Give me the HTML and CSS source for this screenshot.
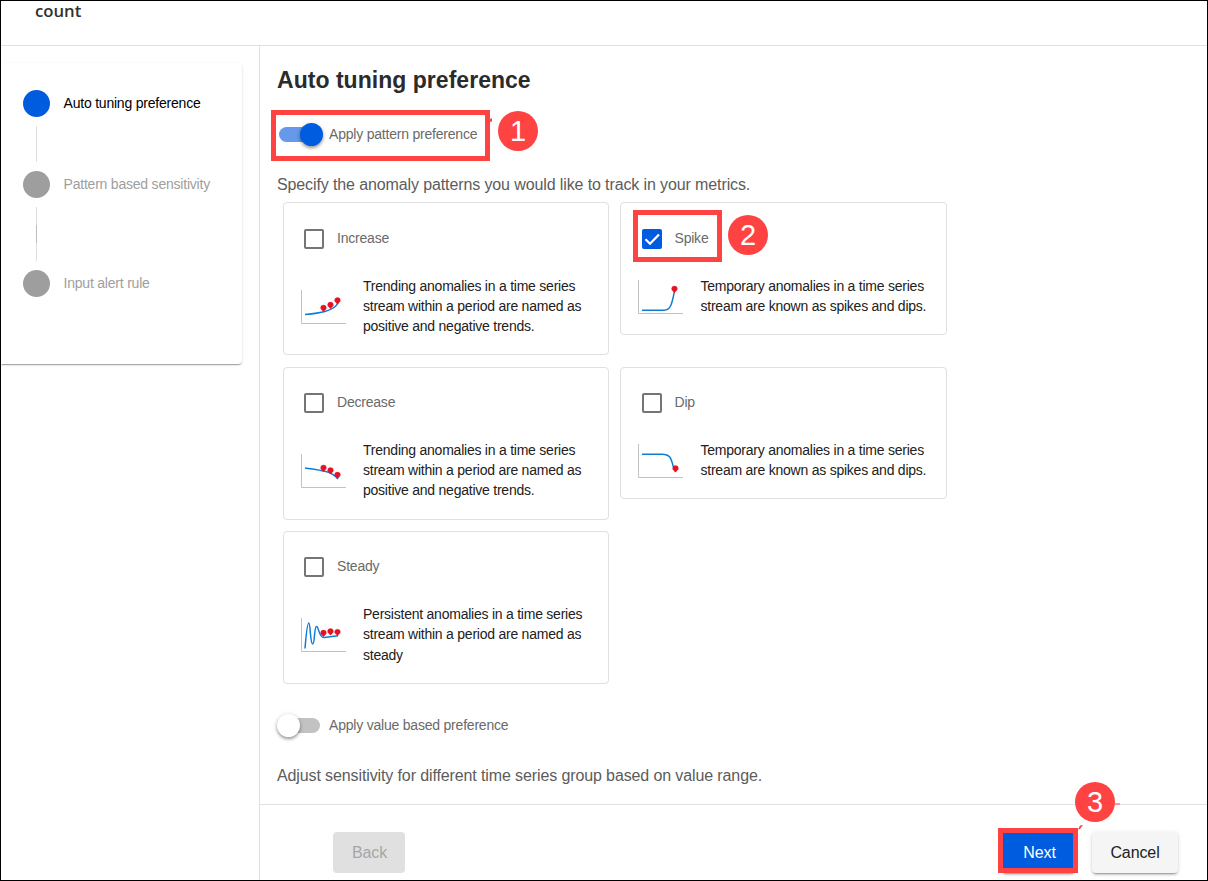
FILE: index.html
```html
<!DOCTYPE html>
<html lang="en">
<head>
<meta charset="utf-8">
<title>Auto tuning preference</title>
<link rel="stylesheet" href="styles.css">
</head>
<body>
<div class="window">
  <header class="topbar"><span class="topbar-title">count</span></header>
  <div class="body">
    <aside class="sidebar">
      <div class="stepper">
        <div class="step active"><span class="dot"></span><span class="step-label">Auto tuning preference</span></div>
        <div class="connector"></div>
        <div class="step"><span class="dot"></span><span class="step-label">Pattern based sensitivity</span></div>
        <div class="connector long"></div>
        <div class="step"><span class="dot"></span><span class="step-label">Input alert rule</span></div>
      </div>
    </aside>
    <main class="main">
      <section class="content">
        <h1 class="title">Auto tuning preference</h1>
        <div class="toggle-row">
          <span class="switch on"><span class="knob"></span></span>
          <span class="label">Apply pattern preference</span>
        </div>
        <p class="hint">Specify the anomaly patterns you would like to track in your metrics.</p>
        <div class="cards">
          <article class="card first">
            <div class="check-row"><span class="checkbox"></span><span class="label">Increase</span></div>
            <div class="info">
              <svg class="chart" width="46" height="35" viewBox="0 0 46 35">
                <path class="axis" d="M.5 0V33.5H45"/>
                <path class="curve" d="M4 24.600C17 23.200 33 21.500 37 13"/>
                <path class="pin" d="M22.500 15a2.900 2.900 0 0 1 2.900 2.900c0 1.500-1.600 2-2.900 3.800-1.300-1.800-2.900-2.300-2.900-3.800a2.900 2.900 0 0 1 2.900-2.900z"/>
                <path class="pin" transform="translate(7 -3)" d="M22.500 15a2.900 2.900 0 0 1 2.900 2.900c0 1.500-1.600 2-2.900 3.800-1.300-1.800-2.900-2.300-2.900-3.800a2.900 2.900 0 0 1 2.900-2.900z"/>
                <path class="pin" transform="translate(14 -7.500)" d="M22.500 15a2.900 2.900 0 0 1 2.900 2.900c0 1.500-1.600 2-2.900 3.800-1.300-1.800-2.900-2.300-2.900-3.800a2.900 2.900 0 0 1 2.900-2.900z"/>
              </svg>
              <p class="desc">Trending anomalies in a time series<br>stream within a period are named as<br>positive and negative trends.</p>
            </div>
          </article>
          <article class="card short first">
            <div class="check-row"><span class="checkbox checked"><svg width="20" height="20" viewBox="0 0 20 20"><path d="M3.500 10.300L8 14.700L17 5.500"/></svg></span><span class="label">Spike</span></div>
            <div class="info">
              <svg class="chart raised" width="46" height="35" viewBox="0 0 46 35">
                <path class="axis" d="M.5 0V33.500H45"/>
                <path class="curve" d="M4 30.300H26C33 30.300 34 23 36.500 11"/>
                <path class="pin" transform="translate(14 -9)" d="M22.500 15a2.900 2.900 0 0 1 2.900 2.900c0 1.500-1.600 2-2.900 3.800-1.300-1.800-2.900-2.300-2.900-3.800a2.900 2.900 0 0 1 2.900-2.900z"/>
              </svg>
              <p class="desc">Temporary anomalies in a time series<br>stream are known as spikes and dips.</p>
            </div>
          </article>
          <article class="card">
            <div class="check-row"><span class="checkbox"></span><span class="label">Decrease</span></div>
            <div class="info">
              <svg class="chart" width="46" height="35" viewBox="0 0 46 35">
                <path class="axis" d="M.5 0V33.500H45"/>
                <path class="curve" d="M4 14C19 16 31 17 37 25"/>
                <path class="pin" transform="translate(0 -4)" d="M22.500 15a2.900 2.900 0 0 1 2.900 2.900c0 1.500-1.600 2-2.900 3.800-1.300-1.800-2.900-2.300-2.900-3.800a2.900 2.900 0 0 1 2.900-2.900z"/>
                <path class="pin" transform="translate(7 -1.500)" d="M22.500 15a2.900 2.900 0 0 1 2.900 2.900c0 1.500-1.600 2-2.900 3.800-1.300-1.800-2.900-2.300-2.900-3.800a2.900 2.900 0 0 1 2.900-2.900z"/>
                <path class="pin" transform="translate(14 3)" d="M22.500 15a2.900 2.900 0 0 1 2.900 2.900c0 1.500-1.600 2-2.900 3.800-1.300-1.800-2.900-2.300-2.900-3.800a2.900 2.900 0 0 1 2.900-2.900z"/>
              </svg>
              <p class="desc">Trending anomalies in a time series<br>stream within a period are named as<br>positive and negative trends.</p>
            </div>
          </article>
          <article class="card short dip">
            <div class="check-row"><span class="checkbox"></span><span class="label">Dip</span></div>
            <div class="info">
              <svg class="chart raised" width="46" height="35" viewBox="0 0 46 35">
                <path class="axis" d="M.5 0V33.500H45"/>
                <path class="curve" d="M4 10.300H24C32 10.300 33 14 35 21.500L37 27"/>
                <path class="pin" transform="translate(15 6.500)" d="M22.500 15a2.900 2.900 0 0 1 2.900 2.900c0 1.500-1.600 2-2.900 3.800-1.300-1.800-2.900-2.300-2.900-3.800a2.900 2.900 0 0 1 2.900-2.900z"/>
              </svg>
              <p class="desc">Temporary anomalies in a time series<br>stream are known as spikes and dips.</p>
            </div>
          </article>
          <article class="card">
            <div class="check-row"><span class="checkbox"></span><span class="label">Steady</span></div>
            <div class="info">
              <svg class="chart" width="46" height="35" viewBox="0 0 46 35">
                <path class="axis" d="M.5 0V33.500H45"/>
                <path class="curve" d="M4 30.500C5 19 6 5 7.800 5C9.600 5 9 26 11.700 26C14 26 13 8.500 15.500 8.500C18 8.500 17.500 19.500 23 19.500C27 19.500 33 17.500 37 18"/>
                <path class="pin" transform="translate(0 -3)" d="M22.500 15a2.900 2.900 0 0 1 2.900 2.900c0 1.500-1.600 2-2.900 3.800-1.300-1.800-2.900-2.300-2.900-3.800a2.900 2.900 0 0 1 2.900-2.900z"/>
                <path class="pin" transform="translate(7 -4.500)" d="M22.500 15a2.900 2.900 0 0 1 2.900 2.900c0 1.500-1.600 2-2.900 3.800-1.300-1.800-2.900-2.300-2.900-3.800a2.900 2.900 0 0 1 2.900-2.900z"/>
                <path class="pin" transform="translate(14 -3.800)" d="M22.500 15a2.900 2.900 0 0 1 2.900 2.900c0 1.500-1.600 2-2.900 3.800-1.300-1.800-2.900-2.300-2.900-3.800a2.900 2.900 0 0 1 2.900-2.900z"/>
              </svg>
              <p class="desc loose">Persistent anomalies in a time series<br>stream within a period are named as<br>steady</p>
            </div>
          </article>
        </div>
        <div class="toggle-row value">
          <span class="switch"><span class="knob"></span></span>
          <span class="label">Apply value based preference</span>
        </div>
        <p class="hint">Adjust sensitivity for different time series group based on value range.</p>
      </section>
      <footer class="footer">
        <button class="btn back" disabled>Back</button>
        <button class="btn next">Next</button>
        <button class="btn cancel">Cancel</button>
      </footer>
    </main>
  </div>
  <div class="box box1"></div><div class="badge badge1">1</div>
  <div class="box box2"></div><div class="badge badge2">2</div>
  <div class="box box3"></div><div class="badge badge3">3</div>
  <svg class="marks" width="1208" height="881" viewBox="0 0 1208 881"><path d="M489 119.500L492 118V121.500L490 122zM1114 803.500H1120V804.500H1114zM1078 829.500L1080 825.500L1083 825L1080 829z"/></svg>
</div>
</body>
</html>
```
FILE: styles.css
```css
* { box-sizing: border-box; }
body { margin: 0; background: #fff; font-family: "Liberation Sans", Arial, sans-serif; font-size: 14px; color: #212121; }
h1, p { margin: 0; }
.window { position: relative; width: 1208px; height: 881px; border: 1px solid #000; overflow: hidden; display: flex; flex-direction: column; }
.topbar { height: 45px; flex: none; border-bottom: 1px solid #e0e0e0; padding-left: 34px; }
.topbar-title { display: block; font: 600 16.700px/20px "Open Sans", "Noto Sans", sans-serif; color: #323130; }
.body { flex: 1; display: flex; min-height: 0; }
.sidebar { width: 259px; flex: none; border-right: 1px solid #e0e0e6; padding-top: 17px; }
.stepper { width: 241px; height: 301px; padding: 27px 0 0 22px; border-radius: 0 4px 4px 0; background: #fff; box-shadow: 0 2px 1px -1px rgba(0,0,0,.2), 0 1px 1px rgba(0,0,0,.14), 0 1px 3px rgba(0,0,0,.12); }
.step { display: flex; align-items: center; gap: 13.500px; height: 27px; color: #9e9e9e; }
.dot { width: 27px; height: 27px; border-radius: 50%; background: #9e9e9e; }
.active { color: #000; }
.active .dot { background: #005cde; }
.step-label { line-height: 20px; padding-bottom: 2px; letter-spacing: -.21px; white-space: nowrap; }
.connector { width: 1px; height: 36px; margin: 9px 0 9px 13px; background: #dedede; }
.connector.long { height: 54px; background: linear-gradient(#dedede 18px, #bdbdbd 18px, #bdbdbd 36px, #dedede 36px); }
.main { flex: 1; display: flex; flex-direction: column; min-width: 0; }
.content { height: 758px; padding: 18px 0 0 17px; }
.title { font-size: 23px; line-height: 32px; letter-spacing: .03px; color: #2b2b2b; }
.toggle-row { display: flex; align-items: center; height: 24px; margin-top: 26px; }
.label { color: #6a6a6a; white-space: nowrap; line-height: 20px; letter-spacing: -.21px; }
.switch { display: flex; align-items: center; width: 41px; height: 15px; margin: 0 9px 0 2px; border-radius: 8px; background: #6699eb; padding-left: 20.500px; }
.knob { flex: none; width: 23px; height: 23px; border-radius: 50%; background: #005cde; box-shadow: 0 2px 3px rgba(0,0,0,.3), 0 1px 5px rgba(0,0,0,.18); }
.switch:not(.on) { background: #c2c2c2; padding-left: 0; }
.switch:not(.on) .knob { background: #fff; margin-left: -2px; }
.hint { font-size: 16px; line-height: 24px; margin-top: 27px; letter-spacing: -.115px; color: #5c5c5c; white-space: nowrap; }
.cards { display: grid; grid-template-columns: 326px 327px; column-gap: 11px; grid-template-rows: 165px 164px 153px; margin: 5px 0 0 6px; align-items: start; }
.card { height: 153px; border: 1px solid #e0e0e0; border-radius: 4px; padding: 25px 0 0 20px; }
.card.first { padding-top: 26px; }
.card.short { height: 133px; }
.card.dip { height: 132px; }
.check-row { display: flex; align-items: center; gap: 13px; height: 20px; }
.check-row .label { padding-bottom: 2px; }
.checkbox { width: 20px; height: 20px; border: 2px solid #757575; border-radius: 2px; }
.checkbox.checked { border: 0; background: #005cde; }
.short .checkbox { margin-left: .5px; }
.checkbox svg { display: block; fill: none; stroke: #fff; stroke-width: 2.300; }
.info { display: flex; gap: 16px; margin: 27px 0 0 -3px; }
.desc { line-height: 20.200px; letter-spacing: -.235px; white-space: nowrap; }
.desc.loose { line-height: 20.400px; }
.short .desc { margin-left: .5px; }
.chart { flex: none; margin-top: 14px; }
.chart.raised { margin-top: 4px; }
.axis { fill: none; stroke: #c2c2c2; }
.curve { fill: none; stroke: #0f7cd6; stroke-width: 1.500; }
.pin { fill: #e81123; stroke: #e81123; stroke-width: .3; }
.value { margin-top: 29px; }
.footer { flex: 1; display: flex; border-top: 1px solid #e0e0e6; padding: 27px 0 0 73px; }
.btn { height: 41px; border: 0; border-radius: 4px; font: 16px/41px "Liberation Sans", Arial, sans-serif; letter-spacing: -.1px; padding: 0 0 0 1px; }
.back { width: 72px; background: #e0e0e0; color: #a6a6a6; }
.next { width: 73px; margin-left: 597px; background: #005cde; color: #fff; padding-left: 2px; }
.cancel { width: 86px; margin-left: 16.500px; background: #f5f5f5; color: #212121; }
.next, .cancel { box-shadow: 0 3px 1px -2px rgba(0,0,0,.2), 0 2px 2px rgba(0,0,0,.14), 0 1px 5px rgba(0,0,0,.12); }
.box { position: absolute; border: 5px solid #ff4343; }
.badge { position: absolute; width: 40px; height: 40px; border-radius: 50%; background: #ff4343; color: #fff; font: 29px/41px "Liberation Sans", Arial, sans-serif; text-align: center; }
.box1 { left: 270px; top: 109px; width: 219px; height: 51px; }
.badge1 { left: 497px; top: 110px; }
.box2 { left: 632px; top: 209px; width: 89px; height: 52px; }
.badge2 { left: 727px; top: 214px; }
.box3 { left: 997px; top: 827px; width: 80px; height: 45px; }
.badge3 { left: 1074px; top: 781px; }
.marks { position: absolute; left: -1px; top: -1px; fill: #ff4343; pointer-events: none; }
```
